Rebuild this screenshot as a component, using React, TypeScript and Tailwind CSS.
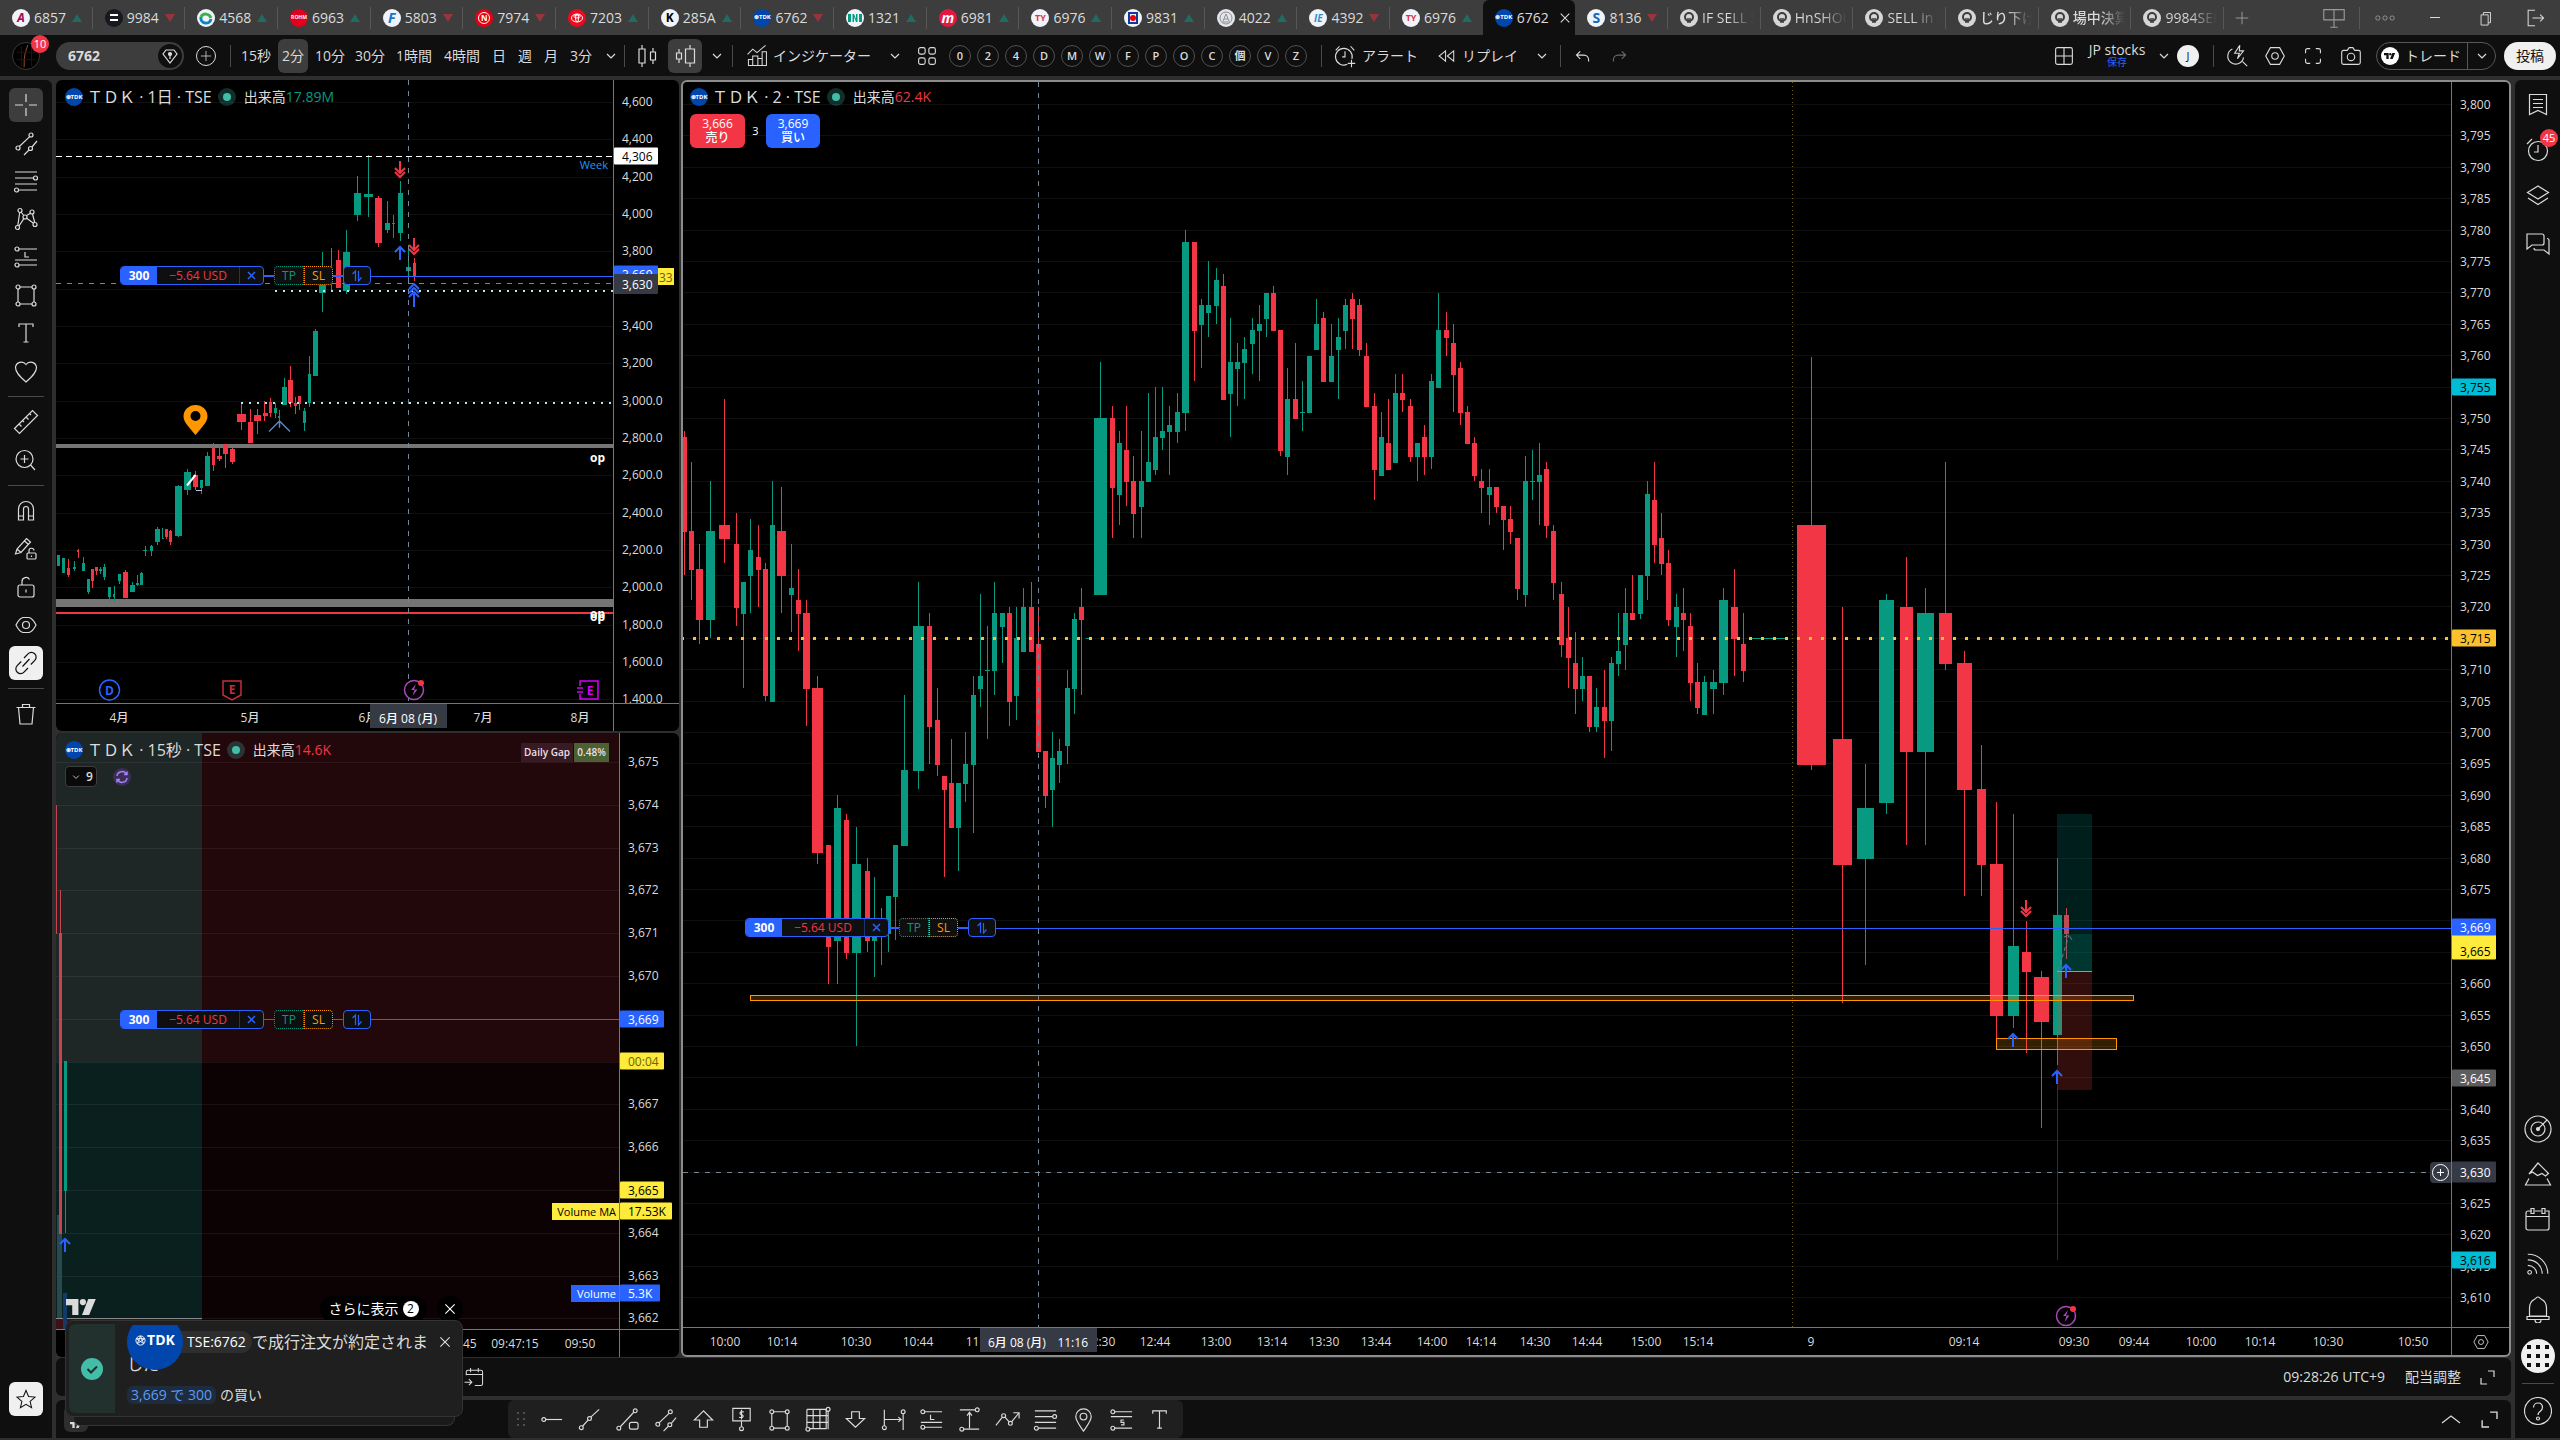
import type { ReactNode } from "react";
import clsx from "clsx";

const UP = "#089981";
const DOWN = "#f23645";

/* ---------- icons ---------- */

type IconName = keyof typeof glyphs;

const glyphs = {
  cross: <path d="M14 3v8M14 17v8M3 14h8M17 14h8" />,
  channel: (
    <>
      <circle cx="19" cy="6" r="2" />
      <circle cx="6" cy="19" r="2" />
      <circle cx="18.5" cy="19.5" r="2" />
      <path d="M7.3 17.5 17.7 7.6M25 12l-5 6M17 21l-5 5" />
    </>
  ),
  fib: (
    <>
      <circle cx="23.5" cy="11" r="2" />
      <circle cx="4.5" cy="23" r="2" />
      <path d="M3 5h22M3 11h18.5M3 17h22M6.5 23H25" />
    </>
  ),
  pattern: (
    <>
      <circle cx="8" cy="5.5" r="2" />
      <circle cx="20" cy="7" r="2" />
      <circle cx="5.5" cy="22.5" r="2" />
      <circle cx="23" cy="19.5" r="2" />
      <circle cx="13" cy="12" r="2" />
      <path d="M7.7 7.5 5.8 20.5M20.5 9l2.2 8.5M9 7l2.8 3.5M14.5 10.5 18.5 8.3M11.8 13.6 7 21M14.7 13.2l6.8 5" />
    </>
  ),
  forecast: (
    <>
      <circle cx="5" cy="6" r="2" />
      <circle cx="5" cy="22" r="2" />
      <path d="M7 6h18M7 22h18M3 17h22M13 9v5h4" />
    </>
  ),
  short: (
    <>
      <circle cx="5" cy="6" r="2" />
      <circle cx="5" cy="23" r="2" />
      <path d="M7 6h18M7 23h18M3 11h22M16.5 14.5h-3v2.5h3v2.5h-3" />
    </>
  ),
  rect: (
    <>
      <circle cx="6" cy="6" r="2" />
      <circle cx="22" cy="6" r="2" />
      <circle cx="6" cy="23" r="2" />
      <circle cx="22" cy="23" r="2" />
      <path d="M8 6h12M8 23h12M6 8v13M22 8v13" />
    </>
  ),
  text: <path d="M7 8V5h14v3M14 5v18M11.5 23h5" />,
  heart: <path d="M14 25C9 20.5 3.5 16 3.5 10.5A5.8 5.8 0 0 1 14 7.5a5.8 5.8 0 0 1 10.5 3C24.5 16 19 20.5 14 25Z" />,
  ruler: <path d="M2.5 20.5 20.5 2.5 25.5 7.5 7.5 25.5ZM7 16l2.5 2.5M10.5 12.5 12 14M14 9l2.5 2.5M17.5 5.5 19 7" />,
  zoom: (
    <>
      <circle cx="12.5" cy="13" r="8.5" />
      <path d="M12.5 9v8M8.5 13h8M18.5 19l4.5 5" />
    </>
  ),
  magnet: <path d="M6.5 23V12a7.5 7.5 0 0 1 15 0v11h-5V12a2.5 2.5 0 0 0-5 0v11ZM6.5 19h5M16.5 19h5" />,
  pencilLock: (
    <>
      <path d="M3.5 19 5 14 14.5 3.5l4 3.5L9 17.5ZM5 14l4 3.5M12.5 6l4 3.5" />
      <rect x="15" y="18" width="9" height="6" rx="1" />
      <path d="M17 18v-2a2.5 2.5 0 0 1 5-.5M19.5 20.5v1.5" />
    </>
  ),
  lock: (
    <>
      <rect x="6" y="12" width="16" height="12" rx="2" />
      <path d="M10 12V8.5a4 4 0 0 1 7.5-2M14 16.5v3" />
    </>
  ),
  eye: (
    <>
      <path d="M4 14c2-4 4.5-7 7-7.5h6c2.5.5 5 3.5 7 7.5-2 4-4.5 7-7 7.5h-6C8.5 21 6 18 4 14Z" />
      <circle cx="14" cy="14" r="3.5" />
    </>
  ),
  link: <path d="m12 9 4-4.2a4.7 4.7 0 0 1 6.8 6.6l-4 4.1M16 19l-4 4.2a4.7 4.7 0 0 1-6.8-6.6l4-4.1M10.5 17.5l7-7.5" />,
  trash: <path d="M4.5 7.5h19M10.5 7V4.5h7V7M6.5 7.5 8 24h12l1.5-16.5" />,
  star: <path d="m14 4 3 7 7.5.7-5.7 5 1.7 7.3-6.5-3.9L7.5 24l1.7-7.3-5.7-5 7.5-.7Z" />,
  hline: (
    <>
      <circle cx="6" cy="14" r="2" />
      <path d="M8 14h17" />
    </>
  ),
  trend: (
    <>
      <circle cx="5.5" cy="22.5" r="2" />
      <circle cx="14" cy="13" r="2" />
      <path d="M6.8 21 12.7 14.5M15.3 11.5 24 3.5" />
    </>
  ),
  ray: (
    <>
      <circle cx="5" cy="23" r="2" />
      <circle cx="22" cy="5" r="2" />
      <rect x="16" y="17" width="9" height="7" rx="2" />
      <path d="M6.5 21.5 20.5 6.5" />
    </>
  ),
  arrowUp: <path d="M14 5 4.5 14.5H10V22h8v-7.5h5.5Z" />,
  arrowDown: <path d="M14 22 4.5 13H10V6h8v7h5.5Z" />,
  dollar: (
    <>
      <path d="M5 2.5h18v13H5ZM14 15.5v6M16.5 6.2c-4-1.5-5.5 2-2.5 2.7s2 4.2-2.5 2.7M14 4v10" />
      <circle cx="14" cy="23.5" r="2" />
    </>
  ),
  gridBox: (
    <>
      <path d="M3 3.5h20v20H5M3 3.5V22M3 10h22M3 17h22M9.5 3.5v20M16.5 3.5v20M25 5v19" />
      <circle cx="25" cy="3.5" r="2" />
      <circle cx="4" cy="24" r="2" />
    </>
  ),
  dateRange: (
    <>
      <circle cx="4.5" cy="22.5" r="2" />
      <circle cx="24" cy="6" r="2" />
      <path d="M4.5 4v16.5M24 8v17M4.5 14H22M19 11.5l3 2.5-3 2.5" />
    </>
  ),
  priceRange: (
    <>
      <circle cx="22" cy="4" r="2" />
      <circle cx="6" cy="24" r="2" />
      <path d="M4 4h16M8 24h16M14 23V7M11.5 10 14 6.5l2.5 3.5" />
    </>
  ),
  path: (
    <>
      <circle cx="10" cy="10" r="2" />
      <circle cx="17" cy="18" r="2" />
      <path d="M2 20 8.7 11.5M11.3 11.5l4.4 5M18.2 16.4 26 7M20 7h6v6" />
    </>
  ),
  pin: (
    <>
      <path d="M14 26C9.5 19.5 6 15.5 6 11a8 8 0 0 1 16 0c0 4.5-3.5 8.5-8 15Z" />
      <circle cx="14" cy="11" r="3.5" />
    </>
  ),
  candles: <path d="M9 3v4M9 21v4M6 7h6v14H6ZM20 6v4M20 18v4M17.5 10h5v8h-5Z" />,
  candlesWide: <path d="M8 7v4M8 17v4M5.5 11h5v6h-5ZM19 3v4M19 21v4M14.5 7h9v14h-9Z" />,
  indicator: <path d="M3 12 9 6l5 4L24 1.500M4 25v-7h5v7M9 25V14h6v11M15 17h5v8M20 20V9h5v16H3.5" />,
  tiles: (
    <>
      <rect x="5" y="5" width="7" height="7" rx="2" />
      <rect x="16" y="5" width="7" height="7" rx="2" />
      <rect x="5" y="16" width="7" height="7" rx="2" />
      <rect x="16" y="16" width="7" height="7" rx="2" />
    </>
  ),
  alarm: <path d="M21.5 17a9 9 0 1 0-5 6M14 9v6h-3M4 8l4-4.5M20 3.5 24 8M21 18v8M17 22h8" />,
  rewind: <path d="M13.5 8 6 14l7.5 6ZM23 8l-7.5 6L23 20Z" />,
  undo: <path d="M11 9 7 13l4 4M7 13h8a5 5 0 0 1 5 5v2" />,
  redo: <path d="m17 9 4 4-4 4M21 13h-8a5 5 0 0 0-5 5v2" />,
  layout: <path d="M7 5h14a2 2 0 0 1 2 2v14a2 2 0 0 1-2 2H7a2 2 0 0 1-2-2V7a2 2 0 0 1 2-2ZM14 5v18M5 14h18" />,
  bolt: <path d="M17 2.5 11.5 11h5L14.5 17 21 8.5h-4.5ZM9 6.5a8.5 8.5 0 1 0 12 9M20 20l5 5" />,
  hex: (
    <>
      <path d="M9 5h10l5 9-5 9H9l-5-9Z" />
      <circle cx="14" cy="14" r="3.5" />
    </>
  ),
  frame: <path d="M6 11V8a2 2 0 0 1 2-2h3M17 6h3a2 2 0 0 1 2 2v3M22 17v3a2 2 0 0 1-2 2h-3M11 22H8a2 2 0 0 1-2-2v-3" />,
  camera: (
    <>
      <path d="M6 8h4l2-3h4l2 3h4a2 2 0 0 1 2 2v11a2 2 0 0 1-2 2H6a2 2 0 0 1-2-2V10a2 2 0 0 1 2-2Z" />
      <circle cx="14" cy="15" r="4" />
    </>
  ),
  bookmark: <path d="M5.5 3.5h17v20L14 19.5l-8.5 4ZM9 8.5h10M9 12.5h10M9 16.5h10" />,
  clock: (
    <>
      <circle cx="14" cy="15" r="9.5" />
      <path d="M14 9v7h-4M3 8l5-5" />
    </>
  ),
  layers: <path d="M14 4 3.5 10.5 14 17l10.500-6.5ZM4 16l10 6.500L24 16" />,
  chat: <path d="M3 5h15a2 2 0 0 1 2 2v7a2 2 0 0 1-2 2H8l-5 4ZM23 9.5a2 2 0 0 1 2 2V25l-5-4h-8a2 2 0 0 1-2-2" />,
  radar: (
    <>
      <circle cx="14" cy="14" r="13" />
      <circle cx="14" cy="14" r="7" />
      <circle cx="14" cy="14" r="1.5" fill="currentColor" />
      <path d="M15 13 23 5" />
    </>
  ),
  pyramid: <path d="M14 3 5 14l3.500-2 5 3.500 4.500-2 3.500 2.500 3-2.500ZM5 18.500 1.500 25h25L23 18.500" />,
  calendar: <path d="M5 6h3M11 6h6M22 6h3v17a2 2 0 0 1-2 2H4a2 2 0 0 1-2-2V8a2 2 0 0 1 2-2h2M2 11.5h23M7 3.5h3v5H7ZM18 3.5h3v5h-3Z" />,
  rss: (
    <>
      <circle cx="5" cy="23" r="2" />
      <path d="M3 3.5c12 0 21.5 9 21.5 21M3 9.5c9 0 15.5 6.5 15.5 15M3 15.5c5.5 0 9.5 4 9.5 9" />
    </>
  ),
  bell: <path d="M14 2c-1.5 0-2 1.5-3.500 2.200C7 6 5.500 9 5.500 13v8h17v-8c0-4-1.500-7-5-8.800C16 3.500 15.500 2 14 2ZM3 21.500h22v3H3ZM11 25a3 3 0 0 0 6 0" />,
  help: (
    <>
      <circle cx="14" cy="14" r="13.5" />
      <path d="M9.5 10.5c0-6 9-6 9 0 0 4-4.5 3.5-4.5 7.5" />
      <circle cx="14" cy="21.5" r="1.5" />
    </>
  ),
  expand: <path d="M15 8h6v6M8 15v6h6" />,
  gotoDate: <path d="M5 12V8a2 2 0 0 1 2-2h15a2 2 0 0 1 2 2v14a2 2 0 0 1-2 2h-7M5 11h19M10 3.5v5M19 3.5v5M3 20h8M8 16.5l3.5 3.5L8 23.5" />,
  caretUp: <path d="m5 18 9-7 9 7" />,
  screen: <path d="M3 5h22v11H3ZM14 5v19M10 24h8" />,
  more: (
    <>
      <circle cx="4" cy="14" r="3" />
      <circle cx="14" cy="14" r="3" />
      <circle cx="24" cy="14" r="3" />
    </>
  ),
  restore: <path d="M9 10h9v13H9ZM12 10V7h9v13h-3" />,
  exit: <path d="M14 5H6v18h8M11 14h13M20 10l4 4-4 4" />,
  plus: <path d="M14 6v16M6 14h16" />,
  close: <path d="m9 9 10 10M19 9 9 19" />,
  chevron: <path d="m10 12 4 4 4-4" />,
};

function Icon({ name, size = 28, className }: { name: IconName; size?: number; className?: string }) {
  return (
    <svg
      className={clsx("shrink-0", className)}
      width={size}
      height={size}
      viewBox="0 0 28 28"
      fill="none"
      stroke="currentColor"
      strokeWidth="1.2"
    >
      {glyphs[name]}
    </svg>
  );
}

function IconButton({
  name,
  label,
  className,
  size,
}: {
  name: IconName;
  label: string;
  className?: string;
  size?: number;
}) {
  return (
    <button aria-label={label} className={clsx("flex shrink-0 items-center justify-center", className)}>
      <Icon name={name} size={size} />
    </button>
  );
}

function TdkBadge() {
  return (
    <span className="flex size-[18px] shrink-0 items-center justify-center rounded-full bg-[#0046ad] text-[6px] font-bold text-white">
      ⊛TDK
    </span>
  );
}

function TvMark({ className }: { className?: string }) {
  return (
    <svg className={className} viewBox="0 0 36 18" fill="currentColor">
      <path d="M0 0h14v18H7V7H0Z" />
      <circle cx="19" cy="3.5" r="3.5" />
      <path d="M25 0h8.500L26 18h-8Z" />
    </svg>
  );
}

/* ---------- tab strip ---------- */

type Tab = { code: string; dir?: "up" | "down"; logo: ReactNode };

function Dot({ className, children }: { className: string; children?: ReactNode }) {
  return (
    <span
      className={clsx(
        "flex size-[18px] shrink-0 items-center justify-center rounded-full leading-none font-bold",
        className,
      )}
    >
      {children}
    </span>
  );
}

const bulb = (
  <Dot className="bg-[#d6d6d6] text-[#3d3d3d]">
    <svg width="14" height="14" viewBox="0 0 14 14" fill="none" stroke="currentColor" strokeWidth="2">
      <circle cx="7" cy="6" r="4" />
      <path d="M6 7v5M8 7v5" strokeWidth="1.5" />
    </svg>
  </Dot>
);

const ty = <Dot className="bg-[#f0f3fa] text-[9px] text-[#e0343f]">TY</Dot>;

const tabs: Tab[] = [
  { code: "6857", dir: "up", logo: <Dot className="bg-[#f0f3fa] text-xs text-[#a3064f] italic">A</Dot> },
  {
    code: "9984",
    dir: "down",
    logo: (
      <Dot className="flex-col gap-[3px] bg-[#16191d]">
        <span className="h-0.5 w-2 bg-white" />
        <span className="h-0.5 w-2 bg-white" />
      </Dot>
    ),
  },
  {
    code: "4568",
    dir: "up",
    logo: (
      <Dot className="bg-[#f0f3fa]">
        <svg width="14" height="14" viewBox="0 0 14 14" fill="none" strokeWidth="3">
          <path d="M2 6a5 5 0 0 0 10 2" stroke="#0a84c6" />
          <path d="M2 6c2-4 8-4 10 1" stroke="#3bb44a" />
        </svg>
      </Dot>
    ),
  },
  { code: "6963", dir: "up", logo: <Dot className="bg-[#e2001a] text-[5px] text-white">ROHM</Dot> },
  { code: "5803", dir: "down", logo: <Dot className="bg-[#f0f3fa] text-sm text-[#1478c8] italic">F</Dot> },
  {
    code: "7974",
    dir: "down",
    logo: (
      <Dot className="bg-[#e60012] text-white">
        <span className="flex size-3 items-center justify-center rounded-full border border-white text-[8px]">N</span>
      </Dot>
    ),
  },
  {
    code: "7203",
    dir: "up",
    logo: (
      <Dot className="bg-[#eb0a1e]">
        <svg width="12" height="10" viewBox="0 0 12 10" fill="none" stroke="#fff">
          <ellipse cx="6" cy="5" rx="5.5" ry="4" />
          <ellipse cx="6" cy="3.5" rx="3" ry="1.5" />
          <ellipse cx="6" cy="5" rx="1.5" ry="4" />
        </svg>
      </Dot>
    ),
  },
  { code: "285A", dir: "up", logo: <Dot className="bg-[#f0f3fa] text-xs text-black">K</Dot> },
  { code: "6762", dir: "down", logo: <TdkBadge /> },
  {
    code: "1321",
    dir: "up",
    logo: (
      <Dot className="bg-[#f0f3fa]">
        <svg width="14" height="8" viewBox="0 0 14 8" fill="#009b80">
          <path d="M0 0h3v8H0ZM4.500 0H6l2 5V0h1.500v8H8L6 3v5H4.500ZM11 0h3v8h-3Z" />
        </svg>
      </Dot>
    ),
  },
  { code: "6981", dir: "up", logo: <Dot className="bg-[#e5173f] text-sm text-white italic">m</Dot> },
  { code: "6976", dir: "up", logo: ty },
  {
    code: "9831",
    dir: "up",
    logo: (
      <Dot className="bg-[#f0f3fa]">
        <span className="flex h-3 w-2.5 items-center justify-center border-2 border-[#0b3c9c]">
          <span className="size-1.5 rounded-sm bg-[#e60012]" />
        </span>
      </Dot>
    ),
  },
  {
    code: "4022",
    dir: "up",
    logo: (
      <Dot className="bg-[#e4e6ea]">
        <svg width="14" height="14" viewBox="0 0 14 14" fill="none" stroke="#8b8f98">
          <circle cx="7" cy="7" r="6" />
          <path d="m4 10 3-7 3 7M5 8h4M3 11h8" />
        </svg>
      </Dot>
    ),
  },
  { code: "4392", dir: "down", logo: <Dot className="bg-[#f0f3fa] text-[10px] text-[#2f8fc0] italic">IE</Dot> },
  { code: "6976", dir: "up", logo: ty },
  { code: "6762", logo: <TdkBadge /> },
  { code: "8136", dir: "down", logo: <Dot className="bg-[#f0f3fa] text-sm text-[#1867b5]">S</Dot> },
  { code: "IF SELL S", logo: bulb },
  { code: "HnSHOUL", logo: bulb },
  { code: "SELL in S", logo: bulb },
  { code: "じり下げ", logo: bulb },
  { code: "場中決算", logo: bulb },
  { code: "9984SELL", logo: bulb },
];

function TabStrip() {
  return (
    <header className="flex h-[35px] shrink-0 bg-[#3d3d3d] text-sm text-[#dbdbdb]">
      <nav className="flex min-w-0 flex-1">
        {tabs.map((tab, i) => {
          const active = i === 16;
          return (
            <a
              key={i}
              href={`#tab-${i}`}
              className={clsx(
                "flex min-w-0 flex-1 items-center gap-1 pl-3 font-medium whitespace-nowrap",
                active && "rounded-t-md bg-[#0f0f0f]",
              )}
            >
              {tab.logo}
              <span
                className={clsx(
                  !tab.dir &&
                    !active &&
                    "w-[52px] overflow-hidden bg-linear-to-r from-[#dbdbdb] from-50% to-[#3d3d3d] bg-clip-text text-transparent",
                )}
              >
                {tab.code}
              </span>
              {tab.dir && (
                <svg className="ml-0.5 shrink-0" width="10" height="10" viewBox="0 0 10 10">
                  {tab.dir === "up" ? (
                    <path d="M5 1 10 9H0Z" fill="#226b60" />
                  ) : (
                    <path d="M5 9 10 1H0Z" fill="#98343e" />
                  )}
                </svg>
              )}
              {active && <Icon name="close" size={24} />}
              {!active && i !== 15 && <span className="ml-auto h-[22px] w-px bg-[#575757]" />}
            </a>
          );
        })}
      </nav>
      <div className="flex w-[336px] shrink-0 items-center">
        <IconButton name="plus" label="新しいタブ" size={22} className="w-[35px] text-[#9a9a9a]" />
        <IconButton name="screen" label="画面" size={26} className="ml-[62px] w-[26px] text-[#9a9a9a]" />
        <span className="ml-3 h-[22px] w-px bg-[#575757]" />
        <IconButton name="more" label="メニュー" size={20} className="w-[50px] text-[#9a9a9a]" />
        <button aria-label="最小化" className="flex w-[50px] items-center justify-center">
          <span className="h-px w-2.5 bg-[#dbdbdb]" />
        </button>
        <IconButton name="restore" label="元に戻す" size={22} className="w-[50px]" />
        <IconButton name="exit" label="終了" size={24} className="w-[50px]" />
      </div>
    </header>
  );
}

/* ---------- top toolbar ---------- */

const intervals = [
  { label: "15秒", width: "w-10" },
  { label: "2分", width: "mx-0.5 w-[30px]" },
  { label: "10分", width: "w-10" },
  { label: "30分", width: "w-10" },
  { label: "1時間", width: "w-12" },
  { label: "4時間", width: "w-12" },
  { label: "日", width: "w-[26px]" },
  { label: "週", width: "w-[26px]" },
  { label: "月", width: "w-[26px]" },
  { label: "3分", width: "w-[34px]" },
];

const templates = ["0", "2", "4", "D", "M", "W", "F", "P", "O", "C", "個", "V", "Z"];

function Sep() {
  return <span className="h-[22px] w-px shrink-0 bg-[#4a4a4a]" />;
}

function Toolbar() {
  return (
    <div className="flex h-[41px] shrink-0 items-center bg-[#0f0f0f] text-sm whitespace-nowrap text-[#dbdbdb]">
      <button aria-label="アカウント" className="relative ml-3 size-7 shrink-0 rounded-full border border-[#3a3a3a] bg-black">
        <svg className="size-full" viewBox="0 0 28 28" fill="none">
          <path d="M12 26c0-8 0-12 2-18l2-6" stroke="#a6532a" />
          <path d="M4 10h20M4 18h20M9 3v22M20 3v22" stroke="#1a1a1a" />
        </svg>
        <span className="absolute -top-2 -right-2.5 flex size-[18px] items-center justify-center rounded-full bg-[#f23645] text-[11px] text-white">
          10
        </span>
      </button>
      <div className="ml-4 flex h-7 w-32 shrink-0 items-center rounded-full bg-[#3d3d3d] pr-0.5 pl-3">
        <input aria-label="シンボル検索" defaultValue="6762" className="w-0 min-w-0 flex-1 bg-transparent font-bold outline-none" />
        <span className="flex size-6 items-center justify-center rounded-full bg-[#0f0f0f]">
          <svg width="18" height="18" viewBox="0 0 18 18" fill="none" stroke="currentColor" strokeWidth="1.2">
            <path d="M5 3h8l3 4-7 9-7-9Z" />
            <circle cx="9" cy="7" r="1.5" fill="currentColor" />
            <path d="M9 7v5" />
          </svg>
        </span>
      </div>
      <button aria-label="比較" className="ml-3 flex size-5 items-center justify-center rounded-full border border-[#dbdbdb]">
        <Icon name="plus" size={18} />
      </button>
      <span className="w-3.5" />
      <Sep />
      <div className="ml-[5px] flex">
        {intervals.map((it) => (
          <button
            key={it.label}
            className={clsx("h-[34px] rounded-md text-center", it.width, it.label === "2分" && "bg-[#3d3d3d]")}
          >
            {it.label}
          </button>
        ))}
      </div>
      <IconButton name="chevron" label="時間足" size={28} className="w-[26px]" />
      <Sep />
      <IconButton name="candles" label="ローソク足" className="w-[43px]" />
      <IconButton name="candlesWide" label="出来高足" className="h-[34px] w-[34px] rounded-md bg-[#3d3d3d]" />
      <IconButton name="chevron" label="足の種類" size={28} className="w-[30px]" />
      <Sep />
      <button className="ml-3 flex w-[130px] items-center gap-1">
        <Icon name="indicator" size={24} />
        インジケーター
      </button>
      <IconButton name="chevron" label="お気に入り" size={28} className="ml-1.5 w-7" />
      <IconButton name="tiles" label="テンプレート" size={26} className="mr-2.5 ml-1.5 w-6" />
      <div className="flex gap-1.5">
        {templates.map((t) => (
          <button
            key={t}
            className="flex size-[22px] items-center justify-center rounded-full border border-[#4f4f4f] text-[11px] font-semibold"
          >
            {t}
          </button>
        ))}
      </div>
      <span className="w-3.5" />
      <Sep />
      <button className="ml-2.5 flex w-[90px] items-center gap-1">
        <Icon name="alarm" size={26} />
        アラート
      </button>
      <button className="ml-3 flex w-[86px] items-center gap-1">
        <Icon name="rewind" size={24} />
        リプレイ
      </button>
      <IconButton name="chevron" label="リプレイ設定" size={28} className="ml-1 w-9" />
      <Sep />
      <IconButton name="undo" label="元に戻す" size={26} className="ml-2 w-7" />
      <IconButton name="redo" label="やり直す" size={26} className="ml-2 w-7 text-[#6b6b6b]" />
      <div className="ml-auto flex items-center">
        <IconButton name="layout" label="レイアウト" size={26} className="w-[26px]" />
        <button className="ml-2.5 flex w-[60px] flex-col items-center leading-[13px]">
          JP stocks
          <span className="text-[10px] text-[#2962ff]">保存</span>
        </button>
        <IconButton name="chevron" label="レイアウト一覧" size={28} className="ml-1 w-[26px]" />
        <span className="flex size-[22px] items-center justify-center rounded-full bg-[#f0f0f0] text-[11px] text-[#0f0f0f]">
          J
        </span>
        <span className="w-3.5" />
        <Sep />
        <IconButton name="bolt" label="クイック検索" size={26} className="ml-1 w-[38px]" />
        <IconButton name="hex" label="設定" size={26} className="w-[38px]" />
        <IconButton name="frame" label="全画面" size={26} className="w-[38px]" />
        <IconButton name="camera" label="スナップショット" size={26} className="w-[38px]" />
        <div className="ml-1.5 flex h-7 w-[120px] items-center rounded-full border border-[#575757] pl-1">
          <button className="flex flex-1 items-center gap-1.5">
            <span className="flex size-[18px] items-center justify-center rounded-full bg-white text-[#0f0f0f]">
              <TvMark className="w-3" />
            </span>
            トレード
          </button>
          <span className="h-full w-px bg-[#575757]" />
          <IconButton name="chevron" label="トレード設定" size={28} className="w-[27px]" />
        </div>
        <button className="mr-1 ml-2 h-7 w-[52px] rounded-full bg-[#f0f0f0] text-[#0f0f0f]">投稿</button>
      </div>
    </div>
  );
}

/* ---------- side bars ---------- */

const drawTools: (IconName | "-")[] = [
  "cross", "channel", "fib", "pattern", "forecast", "rect", "text", "heart",
  "-", "ruler", "zoom",
  "-", "magnet", "pencilLock", "lock", "eye", "link",
  "-", "trash",
];

function LeftBar() {
  return (
    <aside className="flex w-[52px] shrink-0 flex-col items-center rounded-tr-md bg-[#0f0f0f] pt-1.5 pb-[22px] text-[#dbdbdb]">
      {drawTools.map((tool, i) =>
        tool === "-" ? (
          <span key={i} className="my-1.5 h-px w-9 bg-[#4a4a4a]" />
        ) : (
          <span key={i} className="flex h-[38px] items-center">
            <IconButton
              name={tool}
              label={tool}
              size={28}
              className={clsx(
                "size-[34px] rounded-md",
                tool === "cross" && "bg-[#3d3d3d]",
                tool === "link" && "bg-[#f0f0f0] text-[#0f0f0f]",
              )}
            />
          </span>
        ),
      )}
      <IconButton name="star" label="お気に入りツール" size={24} className="mt-auto size-[34px] rounded-md bg-[#f0f0f0] text-[#0f0f0f]" />
    </aside>
  );
}

function RightBar() {
  return (
    <aside className="flex w-[45px] shrink-0 flex-col rounded-tl-md bg-[#0f0f0f] pt-0.5 text-[#dbdbdb]">
      <IconButton name="bookmark" label="ウォッチリスト" className="h-[45px]" />
      <button aria-label="アラート" className="relative flex h-[45px] items-center justify-center">
        <Icon name="clock" size={28} />
        <span className="absolute top-0.5 right-0.5 flex size-[18px] items-center justify-center rounded-full bg-[#f23645] text-[11px] text-white">
          45
        </span>
      </button>
      <IconButton name="layers" label="オブジェクト" className="h-[47px]" />
      <IconButton name="chat" label="チャット" className="h-[47px]" />
      <span className="flex-1" />
      <IconButton name="radar" label="スクリーナー" className="h-[45px]" />
      <IconButton name="pyramid" label="パイン" className="h-[45px]" />
      <IconButton name="calendar" label="カレンダー" className="h-[45px]" />
      <IconButton name="rss" label="ニュース" size={26} className="h-[45px]" />
      <IconButton name="bell" label="通知" className="h-[45px]" />
      <button
        aria-label="アプリ"
        className="mx-auto mt-2 mb-1.5 grid size-[34px] grid-cols-[4px_4px_4px] place-content-center gap-[5px] rounded-full bg-[#f0f0f0]"
      >
        {Array.from({ length: 9 }, (_, i) => (
          <span key={i} className="size-1 bg-[#0f0f0f]" />
        ))}
      </button>
      <span className="mx-auto mt-1 h-px w-8 bg-[#4a4a4a]" />
      <IconButton name="help" label="ヘルプ" className="h-[54px]" />
    </aside>
  );
}

/* ---------- candles ---------- */

// x centre, body width, high, body top, body bottom, low, 1 when rising
type Candle = [number, number, number, number, number, number, number];
type Block = { ox: number; oy: number; sx: number; sy: number; data: Candle[] };

const dailyBlocks: Block[] = [
  {
    ox: 0, oy: 80, sx: 2.306, sy: 3,
    data: [
      [557,21,970,1002,1026,1050,0],[577,12,987,1026,1089,1089,0],[594,16,987,1005,1023,1062,0],[611,11,963,999,1008,1023,0],
      [623,7,954,966,999,1011,0],[635,6,968,984,999,1014,1],[644,5,990,1008,1014,1044,1],[656,12,894,921,975,975,1],
      [670,12,858,900,970,980,0],[681,7,950,968,978,1002,0],[690,7,948,948,972,990,0],[702,7,984,993,1029,1053,1],
      [714,7,828,882,970,980,1],[727,11,747,753,888,888,1],[743,16,516,612,639,696,1],[764,3,504,560,600,634,0],
      [780,11,510,540,624,624,0],[799,16,450,516,633,642,1],[824,16,288,339,405,423,1],[849,20,225,342,351,411,1],
      [873,16,348,354,489,501,0],[893,11,363,429,450,459,1],[907,7,405,429,431,474,1],[923,11,303,339,459,483,1],
      [942,12,510,561,573,610,1],[956,7,534,549,590,603,0],
    ],
  },
  {
    ox: 0, oy: 400, sx: 2.306, sy: 3,
    data: [
      [134,7,465,465,498,498,1],[146,7,474,474,519,519,1],[158,7,477,504,525,531,0],[171,6,483,501,507,513,1],
      [181,5,447,450,456,474,0],[193,7,471,489,513,513,1],[204,7,537,537,576,582,1],[213,6,507,507,543,564,0],
      [222,6,501,501,513,525,0],[232,6,501,507,513,522,1],[241,6,492,501,531,540,1],[252,7,561,561,591,606,1],
      [264,5,558,582,591,606,1],[276,7,522,522,543,552,1],[290,11,510,516,594,594,0],[306,11,546,555,576,576,1],
      [317,6,525,549,555,558,1],[326,7,516,519,555,555,1],[335,9,438,450,452,468,1],[349,7,435,438,452,468,1],
      [363,12,381,387,426,435,1],[375,5,384,414,416,417,1],[383,7,387,387,411,417,0],[393,7,390,393,426,435,0],
      [412,16,255,258,408,411,1],[432,16,207,216,270,285,1],[451,12,213,225,261,270,0],[464,7,240,240,264,282,1],
      [478,11,156,168,258,258,1],[492,7,129,141,195,213,0],[506,12,132,168,177,183,0],[520,12,132,132,162,204,0],
      [536,12,141,147,186,192,0],
    ],
  },
];

const mainBlocks: Block[] = [
  {
    ox: 680, oy: 360, sx: 2.45, sy: 2.24,
    data: [
      [11,12,159,172,385,482,0],[28,12,228,383,470,538,0],[48,17,412,468,582,636,0],[75,22,271,383,582,623,1],
      [109,26,87,370,401,455,0],[138,13,343,412,556,596,0],[155,13,497,497,570,735,1],[173,12,356,426,484,567,1],
      [192,12,370,441,470,553,0],[209,13,455,468,753,764,0],[226,13,271,370,766,766,1],[249,22,284,383,484,567,0],
      [273,12,412,511,526,609,1],[290,12,468,538,570,652,0],[310,17,538,567,737,820,0],[337,27,708,735,1104,1129,0],
      [364,12,1086,1086,1315,1398,0],[386,17,974,1004,1301,1398,1],[408,12,1017,1030,1328,1342,0],[432,22,1046,1129,1328,1537,1],
      [459,12,1116,1145,1301,1326,0],[476,13,1158,1280,1301,1382,1],[493,3,1228,1255,1290,1355,0],[511,12,1201,1201,1286,1326,1],
      [528,12,1086,1086,1203,1299,1],[550,18,750,918,1089,1089,1],[584,27,497,596,921,961,1],[611,12,567,596,822,905,0],
      [631,12,735,806,907,932,0],[648,12,932,932,963,1158,0],[665,12,849,948,1048,1048,0],[682,12,948,948,1048,1145,1],
      [699,13,833,905,950,990,1],[719,12,708,750,907,1060,1],[736,12,524,708,737,777,1],[753,12,596,694,697,849,1],
      [770,13,497,567,697,750,1],[790,12,567,567,598,679,1],[807,12,553,567,766,820,0],[824,13,553,623,753,806,1],
      [841,13,511,553,654,654,1],[861,12,497,553,654,654,0],[878,12,553,636,878,878,0],[895,13,876,876,977,1004,0],
      [912,13,833,892,963,1046,1],[930,12,849,876,907,948,1],[949,12,694,735,865,905,1],[966,13,567,580,737,793,1],
      [984,12,511,553,582,750,0],[1000,12,623,623,625,625,1],[1030,32,4,130,526,526,1],[1059,13,103,130,287,399,0],
      [1077,12,159,186,302,370,1],[1094,12,103,202,273,327,0],[1111,12,215,271,345,399,0],[1131,12,159,271,329,399,1],
      [1148,12,74,228,273,273,1],[1165,12,60,172,246,258,1],[1182,12,60,159,175,202,1],[1199,12,103,146,161,258,1],
    ],
  },
  {
    ox: 1170, oy: 220, sx: 2.6133, sy: 2.8,
    data: [
      [19,13,484,538,594,624,1],[40,19,28,62,540,591,1],[64,14,62,62,311,451,0],[82,13,221,238,294,414,1],
      [100,13,115,238,260,328,1],[121,13,134,168,241,291,1],[139,13,151,185,504,504,0],[158,13,274,398,487,608,1],
      [176,13,344,398,417,521,1],[194,13,328,361,400,501,1],[215,13,274,308,347,431,1],[234,13,238,291,311,451,1],
      [252,13,204,204,277,328,1],[270,13,185,204,311,311,0],[288,13,308,308,647,661,0],[307,13,414,501,664,714,1],
      [328,14,344,501,557,557,0],[346,13,451,538,540,591,1],[364,13,381,381,540,540,1],[382,13,221,291,364,364,1],
      [401,13,258,274,454,454,0],[422,13,291,381,454,454,1],[440,13,274,328,364,501,1],[458,13,221,238,311,361,1],
      [476,13,204,221,277,361,0],[495,13,221,238,364,381,0],[513,13,344,381,524,524,0],[534,13,484,521,700,784,0],
      [552,13,538,608,717,717,1],[571,14,501,624,700,700,0],[589,13,431,484,680,680,1],[607,13,431,484,504,538,0],
      [628,13,501,521,664,678,0],[646,13,624,624,664,731,1],[665,13,574,608,664,714,0],[683,13,431,451,664,697,1],
      [701,13,204,308,470,470,1],[722,13,258,308,330,381,0],[740,13,291,344,434,538,0],[759,13,398,414,540,574,0],
      [777,13,521,538,627,627,0],[795,13,608,624,717,731,0],[814,13,697,731,750,820,0],[834,13,697,748,770,854,1],
      [853,13,748,748,804,820,0],[871,13,801,801,840,924,0],[889,13,801,837,874,907,0],[908,13,890,890,1033,1064,0],
      [929,13,661,731,1050,1084,1],[947,13,644,731,733,784,1],[965,13,624,714,734,854,1],[984,13,678,697,857,890,0],
      [1002,13,854,871,1016,1064,0],[1023,13,1014,1047,1190,1224,0],[1041,13,1084,1170,1226,1310,0],[1059,13,1154,1240,1313,1383,0],
      [1078,14,1224,1277,1313,1347,1],[1096,13,1277,1277,1420,1434,0],[1114,13,1310,1364,1420,1434,1],[1135,13,1260,1364,1403,1506,0],
      [1153,13,1224,1240,1403,1487,1],[1172,13,1100,1207,1243,1277,1],[1190,13,1030,1100,1190,1260,1],[1208,13,994,1100,1120,1120,0],
      [1229,13,994,994,1103,1117,1],[1247,13,731,767,997,1064,1],[1266,13,678,784,910,960,0],[1284,13,820,890,963,994,0],
      [1302,13,924,960,1120,1137,0],[1323,13,1047,1084,1140,1224,1],[1342,13,1030,1100,1120,1207,0],[1360,13,1100,1137,1296,1347,0],
      [1378,13,1240,1294,1366,1383,0],[1396,13,1277,1294,1386,1386,1],[1420,18,1260,1294,1313,1383,1],[1446,23,1030,1064,1296,1330,1],
      [1475,18,977,1084,1173,1277,0],[1498,13,1100,1187,1263,1294,0],
    ],
  },
  {
    ox: 1740, oy: 500, sx: 3, sy: 1.96,
    data: [
      [214,87,-280,49,519,529,0],[307,57,210,468,715,986,0],[376,51,517,604,704,911,1],[439,45,184,196,594,615,1],
      [499,39,112,210,494,676,0],[556,51,172,221,494,676,1],[616,39,-74,221,321,333,0],[673,45,296,319,568,776,0],
      [724,27,480,566,715,776,0],[769,39,592,713,1011,1055,0],[820,33,615,874,1011,1035,1],[859,27,825,886,925,1084,0],
      [904,45,923,935,1023,1231,0],[952,27,702,813,1049,1107,1],[979,15,800,813,851,900,0],
    ],
  },
];

function Candles({ blocks }: { blocks: Block[] }) {
  return (
    <g shapeRendering="crispEdges">
      {blocks.flatMap(({ ox, oy, sx, sy, data }, b) =>
        data.map(([x, w, high, top, bottom, low, rising], i) => {
          const px = (v: number) => Math.round(ox + v / sx);
          const py = (v: number) => Math.round(oy + v / sy);
          const fill = rising ? UP : DOWN;
          return (
            <g key={`${b}-${i}`} fill={fill}>
              <rect x={Math.floor(ox + x / sx)} y={py(high)} width="1" height={Math.max(1, py(low) - py(high))} />
              <rect
                x={px(x - w / 2)}
                y={py(top)}
                width={Math.max(1, Math.round(w / sx))}
                height={Math.max(1, py(bottom) - py(top))}
              />
            </g>
          );
        }),
      )}
    </g>
  );
}

/* ---------- chart pieces ---------- */

function Arrow({ x, y, dir, heads = 1 }: { x: number; y: number; dir: "up" | "down"; heads?: number }) {
  const flip = dir === "down" ? -1 : 1;
  return (
    <g
      transform={`translate(${x} ${y}) scale(1 ${flip})`}
      stroke={dir === "up" ? "#2962ff" : DOWN}
      strokeWidth="2"
      fill="none"
    >
      <path d={`M0 ${heads > 2 ? 8 : 1}v13`} />
      {Array.from({ length: heads }, (_, i) => (
        <path key={i} d={`M-5 ${6 + i * 4 - (heads > 1 ? 3 : 0)}l5-5 5 5`} />
      ))}
    </g>
  );
}

function Grid({ from, step, count, color }: { from: number; step: number; count: number; color: string }) {
  return (
    <g stroke={color} shapeRendering="crispEdges">
      {Array.from({ length: count }, (_, i) => {
        const y = Math.round(from + i * step) + 0.5;
        return <line key={i} x1="0" x2="2560" y1={y} y2={y} />;
      })}
    </g>
  );
}

function PriceTag({
  y,
  text,
  fill,
  color,
  width = 44,
  height = 17,
}: {
  y: number;
  text: string;
  fill: string;
  color: string;
  width?: number;
  height?: number;
}) {
  return (
    <g>
      <rect x="0" y={y - height / 2} width={width} height={height} rx="1" fill={fill} />
      <text x="8" y={y} fill={color} dominantBaseline="central">
        {text}
      </text>
    </g>
  );
}

function AxisLabels({ from, step, prices }: { from: number; step: number; prices: string[] }) {
  return (
    <>
      {prices.map((p, i) =>
        p ? (
          <text key={i} x="8" y={Math.round(from + i * step)} dominantBaseline="central">
            {p}
          </text>
        ) : null,
      )}
    </>
  );
}

function TimeLabels({ items }: { items: [number, string][] }) {
  return (
    <>
      {items.map(([x, label]) => (
        <text key={x} x={x} y="13" textAnchor="middle" dominantBaseline="central">
          {label}
        </text>
      ))}
    </>
  );
}

function BoltEvent({ x, y }: { x: number; y: number }) {
  return (
    <g fill="none" stroke="#ab47bc" strokeWidth="1.5">
      <circle cx={x} cy={y} r="9.5" fill="#000" />
      <path d={`M${x + 2} ${y - 6}l-5 6h3.500l-2 6 5-6.500h-3.500Z`} fill="#ab47bc" stroke="none" />
      <circle cx={x + 7} cy={y - 7} r="3" fill={DOWN} stroke="none" />
    </g>
  );
}

function Legend({ interval, volume, volumeClass }: { interval: string; volume: string; volumeClass: string }) {
  return (
    <div className="flex h-[18px] items-center text-base whitespace-nowrap text-[#dbdbdb]">
      <TdkBadge />
      <span className="ml-1">ＴＤＫ · {interval} · TSE</span>
      <span className="ml-1.5 flex size-[18px] shrink-0 items-center justify-center rounded-full bg-[#42bda8]/25">
        <span className="size-2 rounded-full bg-[#42bda8]" />
      </span>
      <span className="ml-2 text-sm">
        出来高<span className={volumeClass}>{volume}</span>
      </span>
    </div>
  );
}

function OrderLine({ className }: { className: string }) {
  return (
    <div className={clsx("absolute flex h-[19px] items-center text-xs leading-none", className)}>
      <div className="flex h-full w-36 items-stretch overflow-hidden rounded-sm border border-[#2962ff] bg-[#0f0f0f]">
        <button className="w-9 bg-[#2962ff] font-bold text-white">300</button>
        <span className="flex flex-1 items-center justify-center text-[#f23645]">−5.64 USD</span>
        <button aria-label="決済" className="flex w-6 items-center justify-center border-l border-[#1b3478] text-[#2962ff]">
          <svg width="9" height="9" viewBox="0 0 9 9" stroke="currentColor" strokeWidth="1.5">
            <path d="m1 1 7 7M8 1 1 8" />
          </svg>
        </button>
      </div>
      <span className="h-px w-2.5 bg-[#2962ff]" />
      <button className="h-full w-[30px] rounded-l-sm border border-dotted border-[#089981] bg-[#0f0f0f] text-[#089981]">
        TP
      </button>
      <button className="h-full w-[29px] rounded-r-sm border border-dotted border-[#ff9800] bg-[#0f0f0f] text-[#ff9800]">
        SL
      </button>
      <span className="h-px w-2.5 bg-[#2962ff]" />
      <button
        aria-label="反転"
        className="flex h-full w-7 items-center justify-center rounded-sm border border-[#2962ff] bg-[#0f0f0f] text-[#2962ff]"
      >
        <svg width="12" height="12" viewBox="0 0 12 12" fill="none" stroke="currentColor" strokeWidth="1.2">
          <path d="M1.5 4 4.5 1v10M7.5 1v10l3-3.5" />
        </svg>
      </button>
    </div>
  );
}

function Pane({
  plot,
  axis,
  time,
  axisWidth,
  className,
}: {
  plot: ReactNode;
  axis: ReactNode;
  time: ReactNode;
  axisWidth: string;
  className?: string;
}) {
  return (
    <section className={clsx("flex min-h-0 min-w-0 flex-col overflow-hidden rounded-md bg-black", className)}>
      <div className="flex min-h-0 flex-1">
        <div className="relative min-w-0 flex-1 overflow-hidden">{plot}</div>
        <svg className={clsx("h-full shrink-0 border-l border-[#777] fill-[#dbdbdb] text-xs font-medium", axisWidth)}>
          {axis}
        </svg>
      </div>
      <div className="flex h-7 shrink-0 border-t border-[#777]">
        <svg className="h-full min-w-0 flex-1 fill-[#dbdbdb] text-xs font-medium">{time}</svg>
        <div className={clsx("flex h-full shrink-0 items-center justify-center border-l border-[#777] text-[#dbdbdb]", axisWidth)}>
          {className && <Icon name="hex" size={20} />}
        </div>
      </div>
    </section>
  );
}

const dailyPrices = [
  "4,600", "4,400", "4,200", "4,000", "3,800", "", "3,400", "3,200", "3,000.0", "2,800.0",
  "2,600.0", "2,400.0", "2,200.0", "2,000.0", "1,800.0", "1,600.0", "1,400.0",
];

function DailyChart() {
  return (
    <Pane
      axisWidth="w-[66px]"
      plot={
        <>
          <svg className="block size-full">
            <g transform="translate(-56 -80)">
              <Grid from={102} step={37.33} count={17} color="#101010" />
              <rect x="56" y="444" width="2000" height="4" fill="#757575" />
              <rect x="56" y="599" width="2000" height="8" fill="#757575" />
              <Candles blocks={dailyBlocks} />
              <rect x="56" y="612" width="2000" height="2" fill={DOWN} />
              <path d="M56 156.500H2000" stroke="#fff" strokeDasharray="6 4" />
              <path d="M275 291H2000M241 403H2000" stroke="#b2ebf2" strokeWidth="2" strokeDasharray="2 6" />
              <path d="M408.500 80V703M56 283.500H2000" stroke="#758696" strokeDasharray="5 6" />
              <path d="M120 276.500H2000" stroke="#2962ff" />
              <path
                fillRule="evenodd"
                fill="#ff9800"
                d="M195.500 435C189 427 183.500 422 183.500 416.500a12 11.500 0 0 1 24 0c0 5.500-5.500 10.500-12 18.500Zm0-24a5 5 0 1 0 0 10 5 5 0 0 0 0-10Z"
              />
              <path d="M269 431.500 279.500 421l10.500 10.500M279.500 421v6" fill="none" stroke="#5d86b8" strokeWidth="1.5" />
              <path d="M187 485.500 195.500 475" stroke="#fff" strokeWidth="2" />
              <path d="M196 490.500h6" stroke="#c5b8e8" />
              <Arrow x={400} y={175} dir="down" heads={2} />
              <Arrow x={414} y={252} dir="down" heads={2} />
              <Arrow x={400} y={246} dir="up" />
              <Arrow x={414} y={286} dir="up" heads={3} />
              <text x="608" y="164" textAnchor="end" fill="#2196f3" className="text-[11px]" dominantBaseline="central">
                Week
              </text>
              <g fill="#fff" className="text-xs font-bold" textAnchor="end">
                <text x="605" y="462">op</text>
                <text x="605" y="618">op</text>
                <text x="605" y="621">op</text>
              </g>
              <g className="text-xs font-bold" textAnchor="middle" fill="none" strokeWidth="1.5">
                <circle cx="109.5" cy="690" r="10" stroke="#2962ff" />
                <path d="M223 681h18v14l-9 5-9-5Z" stroke="#c2303c" />
                <path d="M580 686v-5h18v18h-18v-5" stroke="#d500f9" />
                <path d="M577 688h6M577 692h6" stroke="#d500f9" />
                <text x="109.5" y="694.5" fill="#2962ff">D</text>
                <text x="232" y="694" fill="#c2303c">E</text>
                <text x="590" y="694.5" fill="#d500f9">E</text>
              </g>
              <BoltEvent x={414} y={690} />
            </g>
          </svg>
          <div className="absolute top-2 left-[9px]">
            <Legend interval="1日" volume="17.89M" volumeClass="text-[#089981]" />
          </div>
          <OrderLine className="top-[186px] left-16" />
        </>
      }
      axis={
        <>
          <AxisLabels from={21} step={37.33} prices={dailyPrices} />
          <PriceTag y={76} text="4,306" fill="#fff" color="#000" />
          <rect x="0" y="188" width="60" height="17" fill="#ffeb3b" />
          <text x="45" y="197" fill="#6b6200" dominantBaseline="central">
            33
          </text>
          <PriceTag y={194} text="3,669" fill="#2962ff" color="#fff" />
          <PriceTag y={204} text="3,630" fill="#363a45" color="#fff" height={20} />
        </>
      }
      time={
        <>
          <TimeLabels items={[[63, "4月"], [194, "5月"], [312, "6月"], [427, "7月"], [524, "8月"]]} />
          <rect x="314" y="0" width="77" height="24" fill="#363a45" />
          <text x="352" y="14" fill="#fff" textAnchor="middle" dominantBaseline="central">
            6月 08 (月)
          </text>
        </>
      }
    />
  );
}

function SecondsChart() {
  return (
    <Pane
      axisWidth="w-[60px]"
      plot={
        <>
          <svg className="block size-full">
            <g transform="translate(-56 -733)">
              <rect x="56" y="733" width="146" height="329" fill="#1e2626" />
              <rect x="202" y="733" width="2000" height="329" fill="#22070b" />
              <rect x="56" y="1062" width="146" height="256" fill="#0a201e" />
              <rect x="202" y="1062" width="2000" height="400" fill="#0c0204" />
              <rect x="56" y="1318" width="146" height="20" fill="#3a1218" />
              <g opacity="0.06">
                <Grid from={762} step={42.8} count={14} color="#fff" />
              </g>
              <path d="M56 1318.500h146" stroke="#8a8a8a" />
              <rect x="57" y="1215" width="5" height="103" fill="#264a50" />
              <rect x="63" y="1293" width="4" height="36" fill="#123a6b" />
              <rect x="56" y="805" width="1" height="129" fill="#c84450" />
              <rect x="60" y="890" width="1" height="44" fill="#c84450" />
              <rect x="59" y="933" width="3" height="301" fill="#c84450" />
              <rect x="64" y="1061" width="3" height="130" fill={UP} />
              <rect x="65" y="1190" width="1" height="43" fill={UP} />
              <path d="M120 1019.500H2000" stroke="#2962ff" />
              <Arrow x={65} y={1238} dir="up" />
              <g className="text-[11px] font-medium" textAnchor="end">
                <rect x="552" y="1203" width="80" height="17" fill="#ffeb3b" />
                <text x="616" y="1211" dominantBaseline="central" fill="#000">Volume MA</text>
                <rect x="571" y="1285" width="60" height="17" fill="#2962ff" />
                <text x="616" y="1293" dominantBaseline="central" fill="#fff">Volume</text>
              </g>
            </g>
          </svg>
          <div className="absolute top-2 left-[9px]">
            <Legend interval="15秒" volume="14.6K" volumeClass="text-[#f23645]" />
            <div className="mt-[7px] flex items-center gap-4">
              <button className="flex h-[21px] w-8 items-center rounded-sm border border-[#3d3d3d] bg-[#0a0a0a] text-xs font-semibold text-[#dbdbdb]">
                <Icon name="chevron" size={20} />9
              </button>
              <svg width="18" height="18" viewBox="0 0 18 18" fill="none" stroke="#a580f5" strokeWidth="1.5">
                <circle cx="9" cy="9" r="9" fill="#3b2f55" stroke="none" />
                <path d="M4 8a5 5 0 0 1 9.500-1.500M14 10a5 5 0 0 1-9.500 1.500M14 3.500v3h-3M4 14.500v-3h3" />
              </svg>
            </div>
          </div>
          <div className="absolute top-2.5 right-2.5 flex h-[19px] gap-px text-[10px] font-semibold text-[#f0dfe2]">
            <span className="flex w-[52px] items-center justify-center bg-[#381b22] whitespace-nowrap">Daily Gap</span>
            <span className="flex w-[35px] items-center justify-center bg-[#4b6033]">0.48%</span>
          </div>
          <OrderLine className="top-[277px] left-16" />
          <TvMark className="absolute bottom-3.5 left-2.5 w-8 text-[#dbdbdb]" />
        </>
      }
      axis={
        <>
          <AxisLabels
            from={28}
            step={42.8}
            prices={["3,675", "3,674", "3,673", "3,672", "3,671", "3,670", "", "", "3,667", "3,666", "", "3,664", "3,663", "3,662"]}
          />
          <PriceTag y={286} text="3,669" fill="#2962ff" color="#fff" />
          <PriceTag y={328} text="00:04" fill="#ffeb3b" color="#6b6200" />
          <PriceTag y={457} text="3,665" fill="#ffeb3b" color="#000" />
          <PriceTag y={478} text="17.53K" fill="#ffeb3b" color="#000" width={52} />
          <PriceTag y={560} text="5.3K" fill="#2962ff" color="#fff" width={40} />
        </>
      }
      time={<TimeLabels items={[[397, "09:46:45"], [459, "09:47:15"], [524, "09:50"]]} />}
    />
  );
}

const mainPrices = Array.from({ length: 39 }, (_, i) => {
  const p = 3800 - i * 5;
  return [3755, 3715, 3670, 3665, 3645, 3630].includes(p) ? "" : p.toLocaleString("en-US");
});

function MainChart() {
  return (
    <Pane
      axisWidth="w-[58px]"
      className="row-span-2 border-2 border-[#8c8c8c]"
      plot={
        <>
          <svg className="block size-full">
            <g transform="translate(-683 -82)">
              <Grid from={104} step={31.4} count={39} color="#101010" />
              <path d="M1792.500 82V1329" stroke="#6b5d1c" strokeDasharray="1 3" />
              <Candles blocks={mainBlocks} />
              <path d="M1752 638.500h36" stroke={UP} />
              <path d="M681 638.500H2600" stroke="#fbc02d" strokeWidth="3" strokeDasharray="3 9" />
              <rect x="2057" y="814" width="35" height="157" fill="#009688" fillOpacity="0.2" />
              <rect x="2057" y="934" width="35" height="37" fill="#009688" fillOpacity="0.2" />
              <rect x="2057" y="971" width="35" height="119" fill="#f44336" fillOpacity="0.2" />
              <path d="M2057 971.500h35" stroke="#9598a1" />
              <path d="M2057.500 1085v175" stroke="#00443c" />
              <path d="M2058 971l11-36M2064 937l5-2 3 5" fill="none" stroke="#787b86" strokeDasharray="4 3" />
              <rect x="750.5" y="995.5" width="1383" height="5" fill="#ff9800" fillOpacity="0.2" stroke="#ff9800" />
              <rect x="1996.5" y="1038.5" width="120" height="11" fill="#ff9800" fillOpacity="0.2" stroke="#ff9800" />
              <path d="M745 928.500H2600" stroke="#2962ff" />
              <path d="M1038.500 82V1329M683 1172.500H2600" stroke="#758696" strokeDasharray="5 6" />
              <Arrow x={2026} y={914} dir="down" heads={2} />
              <Arrow x={2013} y={1033} dir="up" />
              <Arrow x={2057} y={1070} dir="up" />
              <Arrow x={2066} y={964} dir="up" />
              <BoltEvent x={2066} y={1316} />
            </g>
          </svg>
          <div className="absolute top-1.5 left-[7px]">
            <Legend interval="2" volume="62.4K" volumeClass="text-[#f23645]" />
            <div className="mt-2 flex items-center text-xs leading-[14px] font-medium text-white">
              <button className="h-[34px] w-[55px] rounded-md bg-[#f23645]">
                3,666
                <br />
                売り
              </button>
              <span className="w-[21px] text-center text-[11px]">3</span>
              <button className="h-[34px] w-[54px] rounded-md bg-[#2962ff]">
                3,669
                <br />
                買い
              </button>
            </div>
          </div>
          <OrderLine className="top-[836px] left-[62px]" />
          <button
            aria-label="価格で注文"
            className="absolute top-[1080px] right-0 flex h-[21px] w-[21px] items-center justify-center rounded-l-sm bg-[#363a45] text-white"
          >
            <svg width="17" height="17" viewBox="0 0 17 17" fill="none" stroke="currentColor">
              <circle cx="8.5" cy="8.5" r="8" />
              <path d="M8.5 5v7M5 8.5h7" />
            </svg>
          </button>
        </>
      }
      axis={
        <>
          <AxisLabels from={22} step={31.4} prices={mainPrices} />
          <PriceTag y={305} text="3,755" fill="#00bcd4" color="#000" />
          <PriceTag y={556} text="3,715" fill="#fbc02d" color="#000" />
          <PriceTag y={861} text="" fill="#ffeb3b" color="#000" />
          <PriceTag y={869} text="3,665" fill="#ffeb3b" color="#000" />
          <PriceTag y={845} text="3,669" fill="#2962ff" color="#fff" />
          <PriceTag y={996} text="3,645" fill="#5d5d5d" color="#fff" />
          <PriceTag y={1090} text="3,630" fill="#363a45" color="#fff" height={21} />
          <PriceTag y={1178} text="3,616" fill="#00bcd4" color="#000" />
        </>
      }
      time={
        <>
          <TimeLabels
            items={[
              [42, "10:00"], [99, "10:14"], [173, "10:30"], [235, "10:44"], [298, "11:00"], [417, "12:30"], [472, "12:44"],
              [533, "13:00"], [589, "13:14"], [641, "13:30"], [693, "13:44"], [749, "14:00"], [798, "14:14"], [852, "14:30"],
              [904, "14:44"], [963, "15:00"], [1015, "15:14"], [1128, "9"], [1281, "09:14"], [1391, "09:30"], [1451, "09:44"],
              [1518, "10:00"], [1577, "10:14"], [1645, "10:30"], [1730, "10:50"],
            ]}
          />
          <rect x="297" y="0" width="117" height="24" fill="#363a45" />
          <text x="305" y="14" fill="#fff" dominantBaseline="central">
            6月 08 (月)
          </text>
          <text x="405" y="14" fill="#fff" textAnchor="end" dominantBaseline="central">
            11:16
          </text>
        </>
      }
    />
  );
}

/* ---------- bottom ---------- */

const favourites: IconName[] = [
  "hline", "trend", "ray", "channel", "arrowUp", "dollar", "rect", "gridBox", "arrowDown",
  "dateRange", "forecast", "priceRange", "path", "fib", "pin", "short", "text",
];

function BottomBars() {
  return (
    <div className="mt-px flex flex-col gap-1 text-sm text-[#dbdbdb]">
      <div className="flex h-[38px] items-center rounded-md bg-[#0f0f0f] pr-2.5">
        <IconButton name="gotoDate" label="日付へ移動" size={24} className="ml-[406px]" />
        <span className="ml-auto">09:28:26 UTC+9</span>
        <button className="ml-5">配当調整</button>
        <IconButton name="expand" label="最大化" size={28} className="ml-3" />
      </div>
      <div className="flex h-[38px] items-center rounded-t-md bg-[#0f0f0f] pr-1.5">
        <button aria-label="パネル" className="ml-2 flex h-[26px] w-6 items-end justify-center rounded-md bg-[#2e2e2e] p-1">
          <TvMark className="w-3" />
        </button>
        <div className="ml-[420px] flex h-[38px] items-center rounded-md bg-[#1f1f1f] pr-[5px]">
          <svg className="w-6" height="16" viewBox="0 0 24 16" fill="#4f4f4f">
            {[0, 6, 12].map((y) => (
              <path key={y} d={`M9 ${y + 1}h2v2h-2zM15 ${y + 1}h2v2h-2z`} />
            ))}
          </svg>
          {favourites.map((name) => (
            <IconButton key={name} name={name} label={name} size={27} className="h-[38px] w-[38px]" />
          ))}
        </div>
        <IconButton name="caretUp" label="パネルを開く" size={28} className="ml-auto" />
        <IconButton name="expand" label="最大化" size={32} className="ml-2" />
      </div>
    </div>
  );
}

function Toast() {
  return (
    <div className="absolute bottom-3.5 left-[65px] w-[398px] text-base text-[#dbdbdb]">
      <div className="flex justify-end gap-2.5 text-sm text-white">
        <button className="flex h-[26px] w-[107px] items-center justify-center gap-1 rounded-full bg-black whitespace-nowrap">
          さらに表示
          <span className="flex size-4 items-center justify-center rounded-full bg-white text-xs text-black">2</span>
        </button>
        <IconButton name="close" label="すべて閉じる" size={26} className="size-[26px] rounded-full bg-black" />
      </div>
      <div className="relative z-10 -mt-0.5 flex h-[97px] rounded-lg border border-[#333] bg-[#1f1f1f] p-[3px]">
        <div className="flex w-[46px] items-center justify-center rounded-l-md bg-[#22302e]">
          <svg width="22" height="22" viewBox="0 0 22 22" fill="none">
            <circle cx="11" cy="11" r="11" fill="#42bda8" />
            <path d="m6.500 11 3.500 3.500 6-6" stroke="#1f2b29" strokeWidth="2" />
          </svg>
        </div>
        <div className="flex-1 pt-0.5 pl-3">
          <div className="flex h-8 items-center">
            <div className="relative flex h-[22px] items-center rounded-full bg-[#2e2e2e] pr-1.5 pl-[60px] text-sm text-white">
              <span className="absolute -top-1.5 left-0 h-[45px] w-14 overflow-hidden">
                <span className="absolute bottom-0 flex size-14 items-center justify-center rounded-full bg-[#0046ad] pb-1 text-sm font-bold">
                  <svg width="11" height="11" viewBox="0 0 12 12" fill="none" stroke="#fff" className="mr-px shrink-0">
                    <circle cx="6" cy="6" r="5" />
                    <path d="M6 1 9.500 9.500 1.500 4h9L2.500 9.500Z" />
                  </svg>
                  TDK
                </span>
              </span>
              TSE:6762
            </div>
            <span className="whitespace-nowrap">で成行注文が約定されま</span>
          </div>
          <p className="-mt-1 leading-5">した</p>
          <p className="mt-3 flex items-center gap-1 text-sm leading-[18px]">
            <span className="rounded-md bg-[#1f2c3d] px-1 text-[#5b9cf6]">3,669 で 300</span>
            の買い
          </p>
        </div>
        <IconButton name="close" label="閉じる" size={26} className="absolute top-2 right-1" />
      </div>
      <div className="mx-2 h-[9px] rounded-b-lg border border-t-0 border-[#333] bg-[#1a1a1a]" />
    </div>
  );
}

export default function App() {
  return (
    <div className="relative flex h-screen flex-col overflow-hidden bg-[#2e2e2e] font-['Open_Sans','Noto_Sans_CJK_JP',sans-serif]">
      <TabStrip />
      <Toolbar />
      <div className="mt-1 mb-0.5 flex min-h-0 flex-1 gap-1">
        <LeftBar />
        <main className="flex min-w-0 flex-1 flex-col">
          <div className="grid min-h-0 flex-1 grid-cols-[623px_1fr] grid-rows-[651fr_624fr] gap-0.5">
            <DailyChart />
            <MainChart />
            <SecondsChart />
          </div>
          <BottomBars />
        </main>
        <RightBar />
      </div>
      <Toast />
    </div>
  );
}
